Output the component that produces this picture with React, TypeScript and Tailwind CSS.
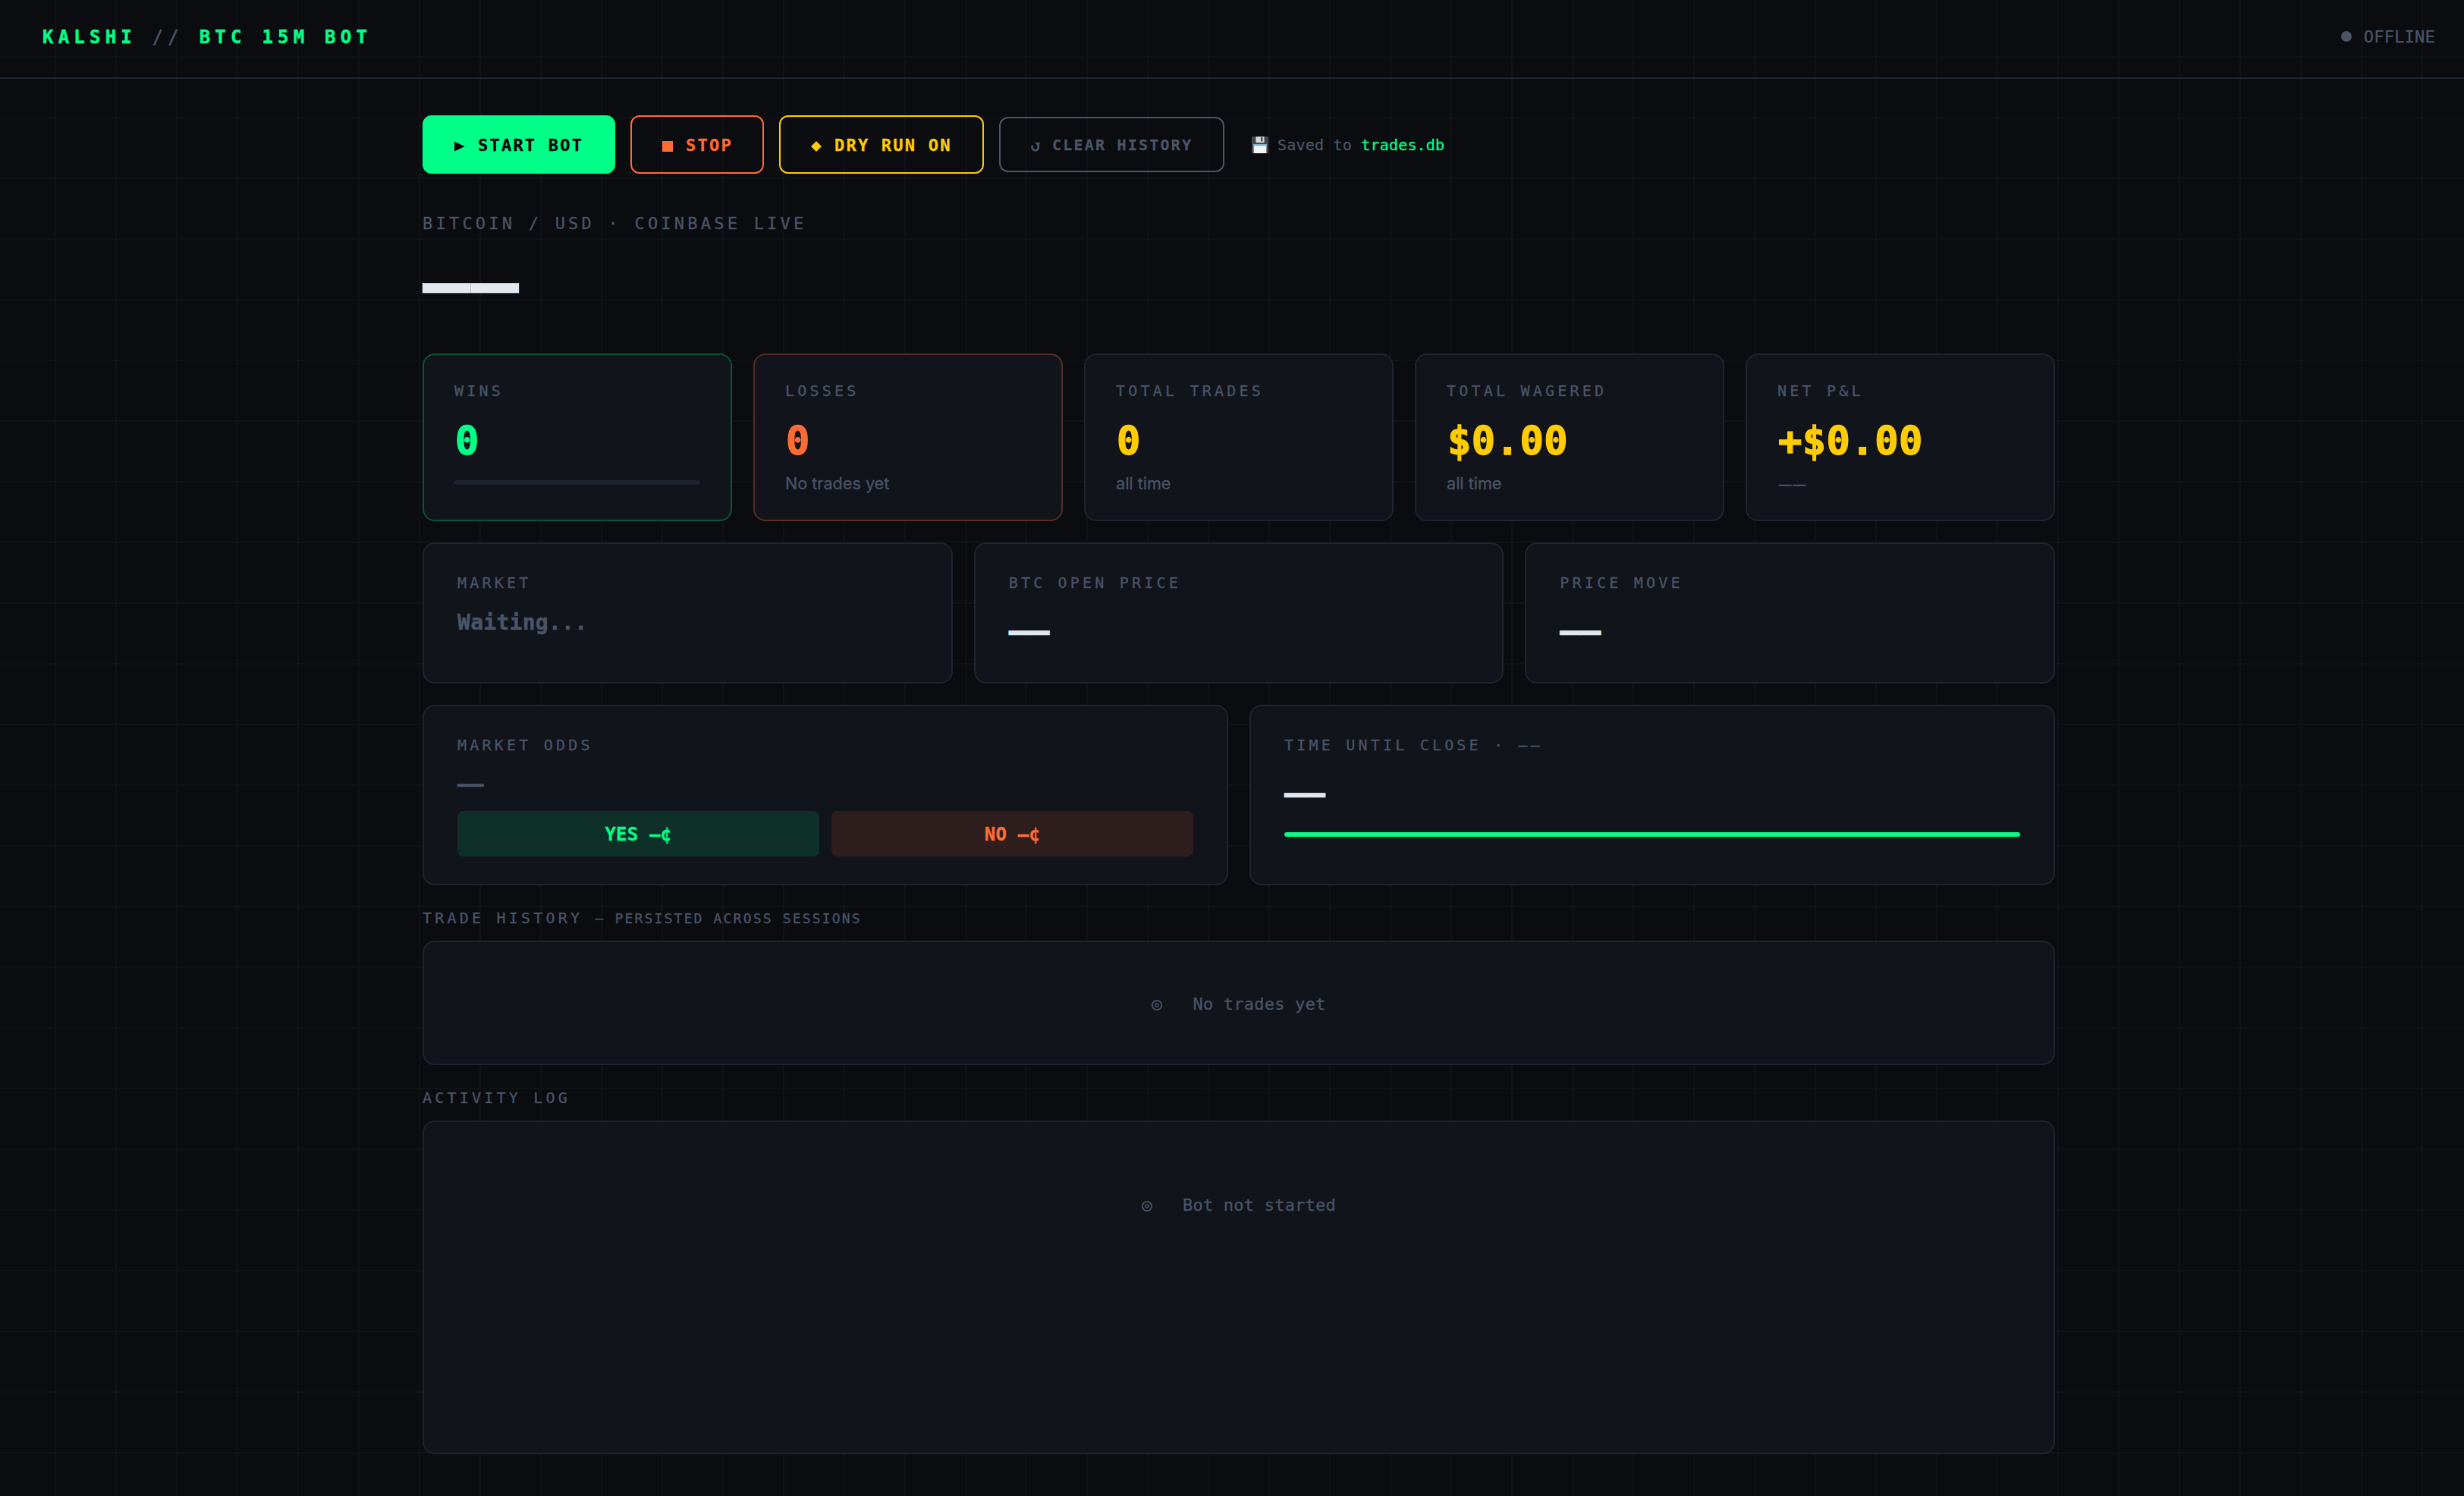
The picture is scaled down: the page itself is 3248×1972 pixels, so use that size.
import type { ReactNode } from "react";
import clsx from "clsx";

type Tone = "green" | "orange" | "yellow";

const TONE_TEXT: Record<Tone, string> = {
  green: "text-[#00ff88]",
  orange: "text-[#ff6b35]",
  yellow: "text-[#ffcc00]",
};

const MONO = "font-['DejaVu_Sans_Mono',monospace] [-webkit-text-stroke:0.3px]";

function Label({ children }: { children: ReactNode }) {
  return (
    <div className="h-[30px] text-[20px] leading-[31px] tracking-[4.2px] whitespace-nowrap text-[#4a5568]">
      {children}
    </div>
  );
}

interface StatCardProps {
  label: string;
  value: string;
  tone: Tone;
  border?: string;
  children: ReactNode;
}

function StatCard({ label, value, tone, border = "border-[#1e2430]", children }: StatCardProps) {
  return (
    <div className={clsx("rounded-2xl border-2 bg-[#11141b] px-10 pt-8", border)}>
      <Label>{label}</Label>
      <div
        className={clsx(
          "mt-[23px] mb-px pl-px text-[52px] leading-[56px] font-bold tracking-[0.5px] [-webkit-text-stroke:1.4px]",
          TONE_TEXT[tone]
        )}
      >
        {value}
      </div>
      {children}
    </div>
  );
}

function Sub({ children }: { children: ReactNode }) {
  return (
    <div className="pt-3 font-['Inter',sans-serif] text-[21.6px] leading-[30px] text-[#4a5568]">
      {children}
    </div>
  );
}

function Card({ label, children }: { label: string; children: ReactNode }) {
  return (
    <div className="rounded-2xl border-2 border-[#1e2430] bg-[#11141b] px-11 pt-9">
      <Label>{label}</Label>
      {children}
    </div>
  );
}

function BigDash() {
  return (
    <div className="mt-[19px] text-[44.7px] leading-[60px] font-bold text-[#e2e8f0] [-webkit-text-stroke:0.7px]">
      ——
    </div>
  );
}

function Empty({ children }: { children: ReactNode }) {
  return (
    <div className="flex items-center justify-center text-[22px] leading-[34px] tracking-[0.22px] text-[#4a5568]">
      <svg width="14" height="14" viewBox="0 0 14 14" className="mt-0.5 mr-[40px]" fill="none" stroke="currentColor">
        <circle cx="7" cy="7" r="6.1" strokeWidth="1.8" />
        <circle cx="7" cy="7" r="2" strokeWidth="1.6" />
      </svg>
      {children}
    </div>
  );
}

function Floppy() {
  return (
    <svg width="22" height="22" viewBox="0 0 22 22">
      <path d="M0 0h21l1 1v21H0z" fill="#43474c" />
      <rect x="5.5" y="0" width="11" height="8" fill="#d5d6d8" />
      <rect x="12" y="1" width="2.4" height="5.4" fill="#43474c" />
      <rect x="2.6" y="10" width="16.8" height="12" fill="#f4f5f7" />
      <rect x="2.6" y="10" width="16.8" height="2.2" fill="#7fb2e0" />
    </svg>
  );
}

const BTN =
  "flex h-[77px] items-center rounded-xl border-2 pt-0.5 pl-10 text-[22px] leading-[34px] font-bold tracking-[2.22px] whitespace-nowrap";

export default function App() {
  return (
    <div
      className={clsx(
        "min-h-[1972px] w-full bg-[#0a0c0f] bg-[linear-gradient(#101218_2px,transparent_2px),linear-gradient(90deg,#101218_2px,transparent_2px)] bg-[size:80px_80px] bg-[position:72px_74px]",
        MONO
      )}
    >
      <header className="flex h-[104px] items-center justify-between border-b-2 border-[#1e2430] pr-[38px] pb-1 pl-14">
        <div className="text-[24px] leading-[38px] font-bold tracking-[6.22px] text-[#00ff88] [-webkit-text-stroke:0.5px]">
          KALSHI <span className="font-normal text-[#4a5568]">//</span> BTC 15M BOT
        </div>
        <div className="flex items-center gap-4 text-[22px] leading-[34px] tracking-[0.22px] text-[#4a5568]">
          <span className="mb-0.5 size-3.5 rounded-full bg-[#4a5568]" />
          OFFLINE
        </div>
      </header>

      <main className="ml-[557px] w-[2152px] pt-12">
        <div className="flex items-center gap-5">
          <button className={clsx(BTN, "w-[254px] border-[#00ff88] bg-[#00ff88] text-black")}>
            <svg width="14" height="14" viewBox="0 0 14 14" className="mt-[3px] mr-[17px]">
              <path d="M0 .5L13.5 7 0 13.5z" fill="currentColor" />
            </svg>
            START BOT
          </button>
          <button className={clsx(BTN, "w-[176px] border-[#ff6b35] text-[#ff6b35]")}>
            <svg width="14" height="14" viewBox="0 0 14 14" className="mt-[3px] mr-[17px]">
              <path d="M0 0h14v14H0z" fill="currentColor" />
            </svg>
            STOP
          </button>
          <button className={clsx(BTN, "w-[270px] border-[#ffcc00] text-[#ffcc00]")}>
            <svg width="14" height="14" viewBox="0 0 14 14" className="mt-[3px] mr-[17px]">
              <path d="M7 0l7 7-7 7-7-7z" fill="currentColor" />
            </svg>
            DRY RUN ON
          </button>
          <button className="flex h-[73px] w-[297px] items-center rounded-xl border-2 border-[#4a5568] pt-px pl-10 text-[20px] leading-[30px] font-bold tracking-[2.2px] whitespace-nowrap text-[#4a5568]">
            <svg
              width="12"
              height="13"
              viewBox="0 0 12 13"
              className="mt-[5px] mr-[16px]"
              fill="none"
              stroke="currentColor"
              strokeWidth="2.6"
            >
              <path d="M2 4.4C.6 8 2.6 11.4 5.8 11.4 9.2 11.4 10.6 8.4 9.2 4.8" />
              <path d="M4.8 1L11.6.4 10.8 7z" fill="currentColor" stroke="none" />
            </svg>
            CLEAR HISTORY
          </button>
          <div className="ml-4 flex items-center text-[20px] leading-[30px] tracking-[0.2px] whitespace-pre text-[#4a5568]">
            <Floppy />
            <span className="ml-3">
              Saved to <span className="text-[#00ff88]">trades.db</span>
            </span>
          </div>
        </div>

        <div className="mt-[49px] text-[22px] leading-[34px] tracking-[4.22px] text-[#4a5568]">
          BITCOIN / USD · COINBASE LIVE
        </div>
        <div className="h-[154px] pt-px text-[105px] leading-[120px] font-bold tracking-[0.5px] text-[#e2e8f0]">
          ——
        </div>

        <div className="grid h-[221px] grid-cols-5 gap-7">
          <StatCard label="WINS" value="0" tone="green" border="border-[#0c5437]">
            <div className="mt-6 h-1.5 rounded-full bg-[#1e2430]" />
          </StatCard>
          <StatCard label="LOSSES" value="0" tone="orange" border="border-[#582e23]">
            <Sub>No trades yet</Sub>
          </StatCard>
          <StatCard label="TOTAL TRADES" value="0" tone="yellow">
            <Sub>all time</Sub>
          </StatCard>
          <StatCard label="TOTAL WAGERED" value="$0.00" tone="yellow">
            <Sub>all time</Sub>
          </StatCard>
          <StatCard label="NET P&L" value="+$0.00" tone="yellow">
            <Sub>
              <span className="pl-0.5 text-[16.5px] font-medium tracking-[2px] [-webkit-text-stroke:0.5px]">——</span>
            </Sub>
          </StatCard>
        </div>

        <div className="mt-7 grid h-[186px] grid-cols-3 gap-7">
          <Card label="MARKET">
            <div className="mt-[17px] text-[28px] leading-[41px] font-bold tracking-[0.27px] text-[#4a5568] [-webkit-text-stroke:0.5px]">
              Waiting...
            </div>
          </Card>
          <Card label="BTC OPEN PRICE">
            <BigDash />
          </Card>
          <Card label="PRICE MOVE">
            <BigDash />
          </Card>
        </div>

        <div className="mt-7 grid h-[238px] grid-cols-2 gap-7">
          <Card label="MARKET ODDS">
            <div className="mt-4 h-14 pt-px text-[28.5px] leading-[40px] font-bold text-[#4a5568] [-webkit-text-stroke:0.6px]">
              ——
            </div>
            <div className="grid h-[60px] grid-cols-2 gap-4 text-center text-[24px] leading-[62px] font-bold tracking-[0.24px]">
              <div className="h-[60px] rounded-lg bg-[#00ff88]/12 text-[#00ff88]">YES —¢</div>
              <div className="h-[60px] rounded-lg bg-[#ff6b35]/12 text-[#ff6b35]">NO —¢</div>
            </div>
          </Card>
          <Card label="TIME UNTIL CLOSE · ——">
            <BigDash />
            <div className="mt-[21px] h-1.5 rounded-full bg-[#00ff88]" />
          </Card>
        </div>

        <div className="mt-7">
          <Label>
            TRADE HISTORY <span className="text-[18px] tracking-[2.18px]">— PERSISTED ACROSS SESSIONS</span>
          </Label>
        </div>
        <div className="mt-[15px] h-[164px] rounded-2xl border-2 border-[#1e2430] bg-[#11141b] pt-[65px]">
          <Empty>No trades yet</Empty>
        </div>

        <div className="mt-7">
          <Label>ACTIVITY LOG</Label>
        </div>
        <div className="mt-[15px] h-[440px] rounded-2xl border-2 border-[#1e2430] bg-[#11141b] pt-[93px]">
          <Empty>Bot not started</Empty>
        </div>
      </main>
    </div>
  );
}
